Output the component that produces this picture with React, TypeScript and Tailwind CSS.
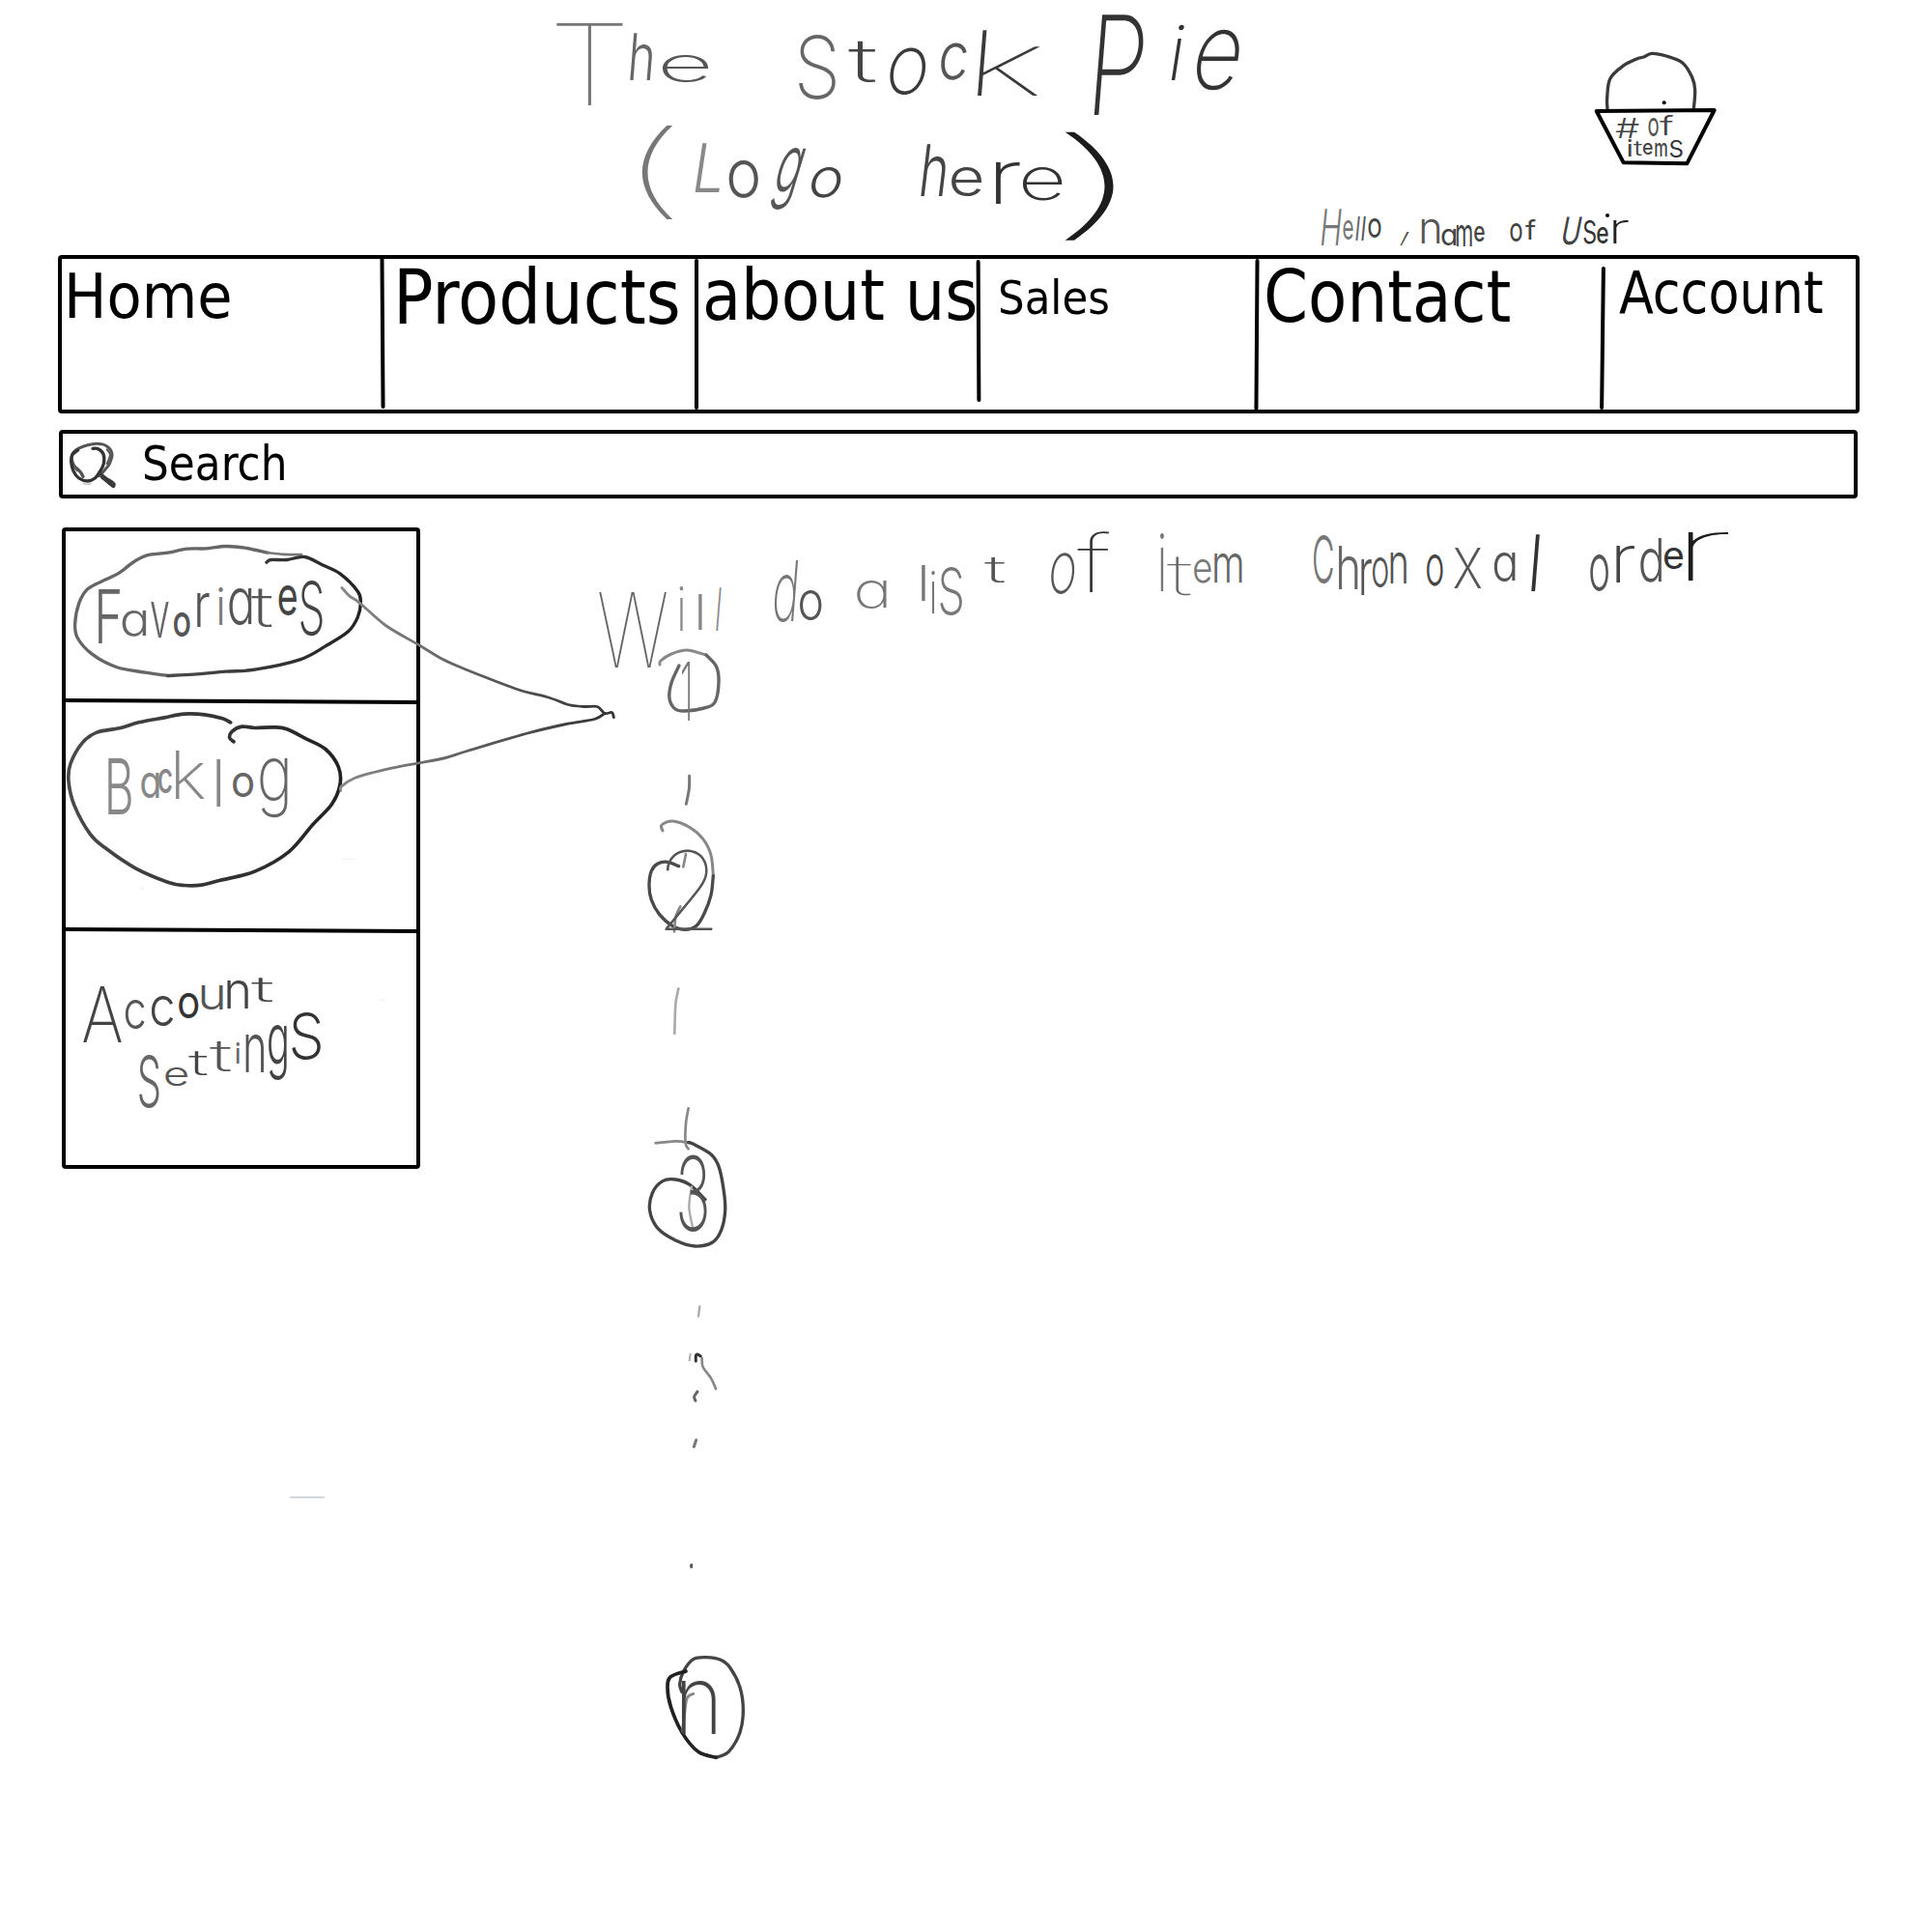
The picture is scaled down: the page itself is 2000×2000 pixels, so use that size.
import React from "react";

type Glyph = [ch: string, x1: number, y1: number, x2: number, y2: number, color?: string, lean?: number];

const HAND = '"Inter", "Lato", sans-serif';
const PRINT = '"DejaVu Sans Condensed", "DejaVu Sans", sans-serif';

const ctx = document.createElement("canvas").getContext("2d")!;

function measure(text: string, size: number, family: string, weight: number) {
  ctx.font = `${weight} ${size}px ${family}`;
  return ctx.measureText(text);
}

/* Text scaled so that its visible ink fills a box of w by h pixels. */
function Fit({
  text,
  w,
  h,
  family = PRINT,
  pen,
  lean = 0,
}: {
  text: string;
  w: number;
  h: number;
  family?: string;
  pen?: number;
  lean?: number;
}) {
  const probe = measure(text, 100, family, 300);
  const size = (100 * h) / (probe.actualBoundingBoxAscent + probe.actualBoundingBoxDescent);
  const natural = ((probe.actualBoundingBoxLeft + probe.actualBoundingBoxRight) * size) / 100;
  const stretch = /^[il1]$/.test(text) ? 1 : Math.max(0.5, (w - Math.abs(lean) * h) / natural);
  const em = stretch > 1 ? size * stretch : size * Math.sqrt(stretch);
  const weight = pen ? Math.max(100, Math.min(500, Math.round(100 + (pen / em - 0.023) * 4600))) : 400;
  const m = measure(text, size, family, weight);
  const inkW = m.actualBoundingBoxLeft + m.actualBoundingBoxRight;
  const inkH = m.actualBoundingBoxAscent + m.actualBoundingBoxDescent;
  const base = m.fontBoundingBoxAscent + (size - m.fontBoundingBoxAscent - m.fontBoundingBoxDescent) / 2;
  const top = base - m.actualBoundingBoxAscent;
  const sy = h / inkH;
  const sx = Math.max(0.3, (w - Math.abs(lean) * inkH) / inkW);
  const tx = sx * m.actualBoundingBoxLeft + lean * (lean > 0 ? top + inkH : top);
  return (
    <span
      className="absolute left-0 top-0 block origin-top-left whitespace-pre leading-none [font-feature-settings:'cv11']"
      style={{
        fontFamily: family,
        fontSize: size,
        fontWeight: weight,
        transform: `matrix(${sx},0,${-lean},${sy},${tx},${-sy * top})`,
      }}
    >
      {text}
    </span>
  );
}

function Printed({ text, w, h, className }: { text: string; w: number; h: number; className: string }) {
  return (
    <span className={`relative block shrink-0 text-black ${className}`} style={{ width: w, height: h }}>
      <Fit text={text} w={w} h={h} />
    </span>
  );
}

/* A handwritten word: every letter has its own box, the word takes their common bounds. */
function Word({
  glyphs,
  className = "",
  color = "#444",
  pen = 4,
}: {
  glyphs: Glyph[];
  className?: string;
  color?: string;
  pen?: number;
}) {
  const x = Math.min(...glyphs.map((g) => g[1]));
  const y = Math.min(...glyphs.map((g) => g[2]));
  const w = Math.max(...glyphs.map((g) => g[3])) - x;
  const h = Math.max(...glyphs.map((g) => g[4])) - y;
  return (
    <span className={`relative block shrink-0 ${className}`} style={{ width: w, height: h }}>
      {glyphs.map(([ch, x1, y1, x2, y2, c, lean], i) => (
        <span
          key={i}
          className="absolute block"
          style={{ left: x1 - x, top: y1 - y, width: x2 - x1, height: y2 - y1, color: c ?? color }}
        >
          <Fit text={ch} w={x2 - x1} h={y2 - y1} family={HAND} pen={pen} lean={lean} />
        </span>
      ))}
    </span>
  );
}

/* Smooth pen line through a list of points. */
function line(p: number[]) {
  const n = p.length / 2;
  const at = (i: number) => {
    const k = Math.max(0, Math.min(n - 1, i));
    return [p[2 * k], p[2 * k + 1]];
  };
  let d = `M${p[0]} ${p[1]}`;
  for (let i = 0; i < n - 1; i++) {
    const [a, b, c, e] = [at(i - 1), at(i), at(i + 1), at(i + 2)];
    d += `C${b[0] + (c[0] - a[0]) / 6} ${b[1] + (c[1] - a[1]) / 6} ${c[0] - (e[0] - b[0]) / 6} ${c[1] - (e[1] - b[1]) / 6} ${c[0]} ${c[1]}`;
  }
  return d;
}

function Pen({ p, c = "#444", w = 11 }: { p: number[]; c?: string; w?: number }) {
  return <path d={line(p)} fill="none" stroke={c} strokeWidth={w} strokeLinecap="round" strokeLinejoin="round" />;
}

function Divider({ className }: { className: string }) {
  return <span className={`block w-1 shrink-0 rounded-full bg-black ${className}`} />;
}

function Cart() {
  return (
    <div className="relative ml-[306px] mt-[50px] h-[124px] w-[132px]">
      <svg className="block h-[124px] w-[132px]" viewBox="918 60 396 372">
        <Pen p={[972, 248, 971, 215, 980, 155, 1020, 115, 1065, 92, 1085, 87, 1110, 76, 1155, 84, 1205, 105, 1235, 150, 1244, 190, 1240, 248]} c="#3a3a3a" w={10} />
        <path d="M938 255 1304 252 1219 418 1022 415Z" fill="none" stroke="#000" strokeWidth={12} strokeLinejoin="round" />
        <circle cx="1148" cy="229" r="6" fill="#000" />
      </svg>
      <div className="absolute left-[26px] top-[69px] flex items-start">
        <Word pen={2.6} color="#444" className="mt-1" glyphs={[["#", 1672, 123, 1697, 144]]} />
        <Word pen={2.6} color="#444" className="ml-[9px]" glyphs={[["o", 1706, 123, 1717, 142, "#555"], ["f", 1718, 119, 1732, 140]]} />
      </div>
      <div className="absolute left-[39px] top-[93px]">
        <Word
          pen={2.6}
          color="#444"
          glyphs={[["i", 1685, 143, 1689, 162], ["t", 1691, 145, 1700, 162], ["e", 1701, 149, 1711, 161], ["m", 1713, 148, 1726, 162], ["s", 1728, 145, 1742, 164, "#333"]]}
        />
      </div>
    </div>
  );
}

function Header() {
  return (
    <header className="flex h-[264px] w-full">
      <h1 className="w-[1340px] shrink-0">
        <span className="flex h-[119px] items-start">
          <Word className="ml-[576px] mt-[25px]" color="#666" glyphs={[["T", 576, 25, 645, 110, "#777"], ["h", 652, 34, 677, 83, "#666", 0.08], ["e", 684, 57, 733, 85, "#555"]]} />
          <Word className="ml-[94px] mt-8" glyphs={[["S", 827, 36, 865, 103, "#666"], ["t", 878, 42, 907, 86, "#444"], ["o", 918, 50, 962, 99, "#3a3a3a", 0.15], ["c", 972, 45, 1002, 82, "#555", 0.1], ["k", 1012, 32, 1081, 100, "#3a3a3a", 0.08]]} />
          <Word className="ml-[51px] mt-[15px]" color="#2a2a2a" glyphs={[["P", 1132, 15, 1186, 119, "#333", 0.08], ["i", 1211, 26, 1227, 83, "#333", 0.16], ["e", 1233, 31, 1288, 94, "#333", 0.2]]} />
        </span>
        <span className="flex items-start">
          <Word className="ml-[664px] mt-3" glyphs={[["(", 664, 131, 698, 228, "#777"], ["L", 719, 148, 752, 199, "#888", 0.15], ["o", 754, 167, 785, 206, "#555"], ["g", 794, 153, 835, 217, "#555", 0.3], ["o", 837, 173, 874, 205, "#444", 0.2]]} />
          <Word className="ml-[79px] mt-[18px]" glyphs={[["h", 953, 150, 982, 204, "#444", 0.12], ["e", 984, 173, 1017, 203, "#444"], ["r", 1031, 169, 1056, 212, "#333"], ["e", 1058, 173, 1100, 208, "#333"], [")", 1101, 137, 1154, 249, "#1c1c1c"]]} />
        </span>
      </h1>
      <div className="flex flex-1 flex-col">
        <Cart />
        <div className="ml-7 mt-[43px] flex items-start">
          <Word pen={2.8} glyphs={[["H", 1368, 217, 1389, 255, "#777", 0.1], ["e", 1390, 229, 1401, 249, "#777"], ["l", 1403, 225, 1408, 250, "#666", 0.1], ["l", 1409, 225, 1414, 250, "#555", 0.1], ["o", 1416, 227, 1430, 247, "#444"], [",", 1449, 240, 1459, 254, "#555", 0.4]]} />
          <Word pen={2.8} className="ml-3 mt-[10px]" glyphs={[["n", 1471, 227, 1490, 252, "#555"], ["a", 1492, 237, 1506, 255, "#444"], ["m", 1508, 233, 1524, 255], ["e", 1526, 235, 1537, 251]]} />
          <Word pen={2.8} className="ml-[26px] mt-[10px]" glyphs={[["o", 1563, 232, 1576, 251], ["f", 1579, 227, 1590, 248]]} />
          <Word pen={2.8} className="ml-[26px] mt-[7px]" glyphs={[["U", 1616, 224, 1638, 253, "#444", 0.2], ["s", 1639, 228, 1652, 253, "#333"], ["e", 1653, 235, 1665, 252, "#333"], ["r", 1669, 228, 1686, 252, "#222"]]} />
          <span className="-ml-[24px] mt-1 block size-1 rounded-full bg-black" />
        </div>
      </div>
    </header>
  );
}

function Nav() {
  return (
    <nav className="ml-[60px] flex h-[164px] w-[1865px] rounded-sm border-4 border-black">
      <a className="w-[330px] shrink-0"><Printed text="Home" w={167} h={49} className="ml-[7px] mt-[14px]" /></a>
      <Divider className="-mt-[3px] h-[158px] -rotate-[0.4deg]" />
      <a className="w-[321px] shrink-0"><Printed text="Products" w={289} h={61} className="ml-[15px] mt-2" /></a>
      <Divider className="h-[156px]" />
      <a className="w-[288px] shrink-0"><Printed text="about us" w={280} h={57} className="ml-[7px] mt-[7px]" /></a>
      <Divider className="mt-[1px] h-[147px] -rotate-[0.3deg]" />
      <a className="w-[284px] shrink-0"><Printed text="Sales" w={112} h={37.5} className="ml-5 mt-[21px]" /></a>
      <Divider className="h-[157px] rotate-[0.4deg]" />
      <a className="w-[354px] shrink-0"><Printed text="Contact" w={252} h={57} className="ml-2 mt-[9px]" /></a>
      <Divider className="mt-[8px] h-[148px] rotate-[0.7deg]" />
      <a><Printed text="Account" w={211} h={45} className="ml-[15px] mt-3" /></a>
    </nav>
  );
}

function SearchBar() {
  return (
    <div className="ml-[61px] mt-[17px] flex h-[71px] w-[1862px] items-start rounded-sm border-4 border-black">
      <svg className="ml-[5px] mt-[6px] h-[54px] w-[52px] shrink-0" viewBox="30 45 156 162">
        <Pen p={[60, 140, 46, 118, 43, 95, 55, 78, 80, 66, 120, 58, 152, 66, 168, 90, 160, 120, 145, 140, 128, 158]} c="#555" w={9} />
        <Pen p={[108, 73, 125, 74, 141, 90, 142, 120, 130, 145, 115, 165, 92, 174, 65, 165, 48, 143, 41, 112, 45, 92, 62, 78]} c="#333" w={10} />
        <Pen p={[152, 76, 162, 92, 152, 120]} c="#555" w={6} />
        <Pen p={[58, 134, 70, 146, 78, 160]} c="#555" w={10} />
        <Pen p={[128, 148, 148, 164, 164, 174, 174, 182, 172, 191, 158, 180, 136, 162]} c="#3a3a3a" w={9} />
        <Pen p={[78, 181, 92, 184, 102, 182]} c="#bbb" w={4} />
      </svg>
      <Printed text="Search" w={145} h={38.5} className="ml-[27px] mt-[10px]" />
    </div>
  );
}

function Sidebar() {
  return (
    <aside className="relative h-[664px] w-[371px] rounded-sm border-4 border-black">
      <div className="flex h-[174px]">
        <Word
          className="ml-[34px] mt-[51px]"
          glyphs={[["F", 102, 611, 124, 667, "#666"], ["a", 126, 633, 149, 660, "#666"], ["v", 156, 623, 175, 660, "#666"], ["o", 180, 634, 197, 659, "#555"], ["r", 204, 614, 217, 649, "#555"], ["i", 226, 608, 231, 647, "#777"], ["a", 237, 610, 258, 648, "#555"], ["t", 260, 610, 282, 651, "#555"], ["e", 288, 606, 307, 637, "#444"], ["s", 311, 601, 334, 659, "#444"]]}
        />
      </div>
      <span className="block h-1 w-full skew-y-[0.35deg] bg-black" />
      <div className="flex h-[233px]">
        <Word
          className="ml-11 mt-[50px]"
          color="#777"
          glyphs={[["B", 112, 785, 136, 843, "#888"], ["a", 146, 800, 163, 827, "#888"], ["c", 164, 795, 178, 820, "#888"], ["k", 182, 777, 212, 827, "#888"], ["l", 224, 785, 229, 834, "#888"], ["o", 241, 799, 263, 824, "#666"], ["g", 269, 785, 298, 847, "#666"]]}
        />
      </div>
      <span className="block h-1 w-full skew-y-[0.3deg] bg-black" />
      <div className="flex flex-col">
        <Word
          className="ml-[18px] mt-[47px]"
          glyphs={[["A", 86, 1020, 126, 1078, "#444"], ["c", 129, 1033, 150, 1063, "#555"], ["c", 157, 1029, 180, 1060, "#444"], ["o", 185, 1026, 206, 1052, "#333"], ["u", 208, 1018, 231, 1043, "#555"], ["n", 235, 1013, 257, 1042, "#444"], ["t", 260, 1010, 284, 1036, "#444"]]}
        />
        <Word
          className="-mt-[31px] ml-[76px]"
          glyphs={[["S", 144, 1091, 165, 1146, "#666"], ["e", 170, 1104, 194, 1124, "#555"], ["t", 195, 1086, 216, 1112, "#444"], ["t", 217, 1076, 240, 1108, "#555"], ["i", 244, 1077, 248, 1099, "#666"], ["n", 254, 1069, 273, 1108, "#555"], ["g", 278, 1059, 297, 1117, "#444"], ["s", 302, 1047, 332, 1096, "#333"]]}
        />
      </div>
      <svg className="pointer-events-none absolute -left-1 -top-1 h-[664px] w-[590px]" viewBox="41 46.5 1770 1992">
        <defs>
          <linearGradient id="rim" x1="0" x2="1"><stop offset="0" stopColor="#4a4a4a" /><stop offset="1" stopColor="#222" /></linearGradient>
          <linearGradient id="trail" x1="0" x2="1"><stop offset="0" stopColor="#888" /><stop offset="1" stopColor="#333" /></linearGradient>
        </defs>
        <Pen c="#666" w={10} p={[680, 125, 610, 110, 550, 105, 490, 112, 430, 113, 370, 125, 305, 133, 265, 153, 220, 187, 180, 207, 122, 237, 95, 280, 82, 345, 90, 390, 135, 440, 210, 480, 300, 497, 370, 507]} />
        <Pen c="#777" w={8} p={[680, 125, 730, 130, 785, 131]} />
        <Pen c="url(#rim)" w={10} p={[370, 507, 450, 503, 550, 494, 640, 488, 780, 457, 860, 415, 930, 370, 960, 325, 969, 280, 960, 245, 905, 190, 850, 163, 795, 138, 740, 147, 690, 147, 677, 155]} />
        <Pen c="url(#rim)" w={11} p={[565, 652, 540, 640, 485, 628, 420, 626, 360, 637, 280, 652, 220, 670, 150, 683, 105, 715, 68, 780, 62, 835, 80, 910, 130, 1000, 180, 1045, 270, 1105, 370, 1148, 420, 1158, 475, 1157, 530, 1143, 640, 1115, 745, 1055, 820, 970, 880, 905, 905, 845, 900, 790, 860, 735, 800, 703, 740, 673, 700, 667, 640, 669, 600, 665, 570, 680, 562, 700, 575, 712]} />
        <Pen c="url(#trail)" w={8.5} p={[911, 234, 935, 260, 965, 280, 1047, 351, 1149, 411, 1224, 456, 1299, 489, 1383, 522, 1464, 552, 1557, 576, 1614, 597, 1662, 603, 1704, 603, 1727, 624, 1749, 621, 1755, 636]} />
        <Pen c="url(#trail)" w={8.5} p={[1727, 624, 1695, 642, 1608, 657, 1482, 687, 1299, 741, 1233, 762, 1149, 778, 1085, 790, 1010, 807, 950, 825, 910, 850, 907, 864]} />
        <Pen c="#ddd" w={3} p={[288, 1162, 294, 1170]} />
        <Pen c="#eee" w={3} p={[910, 1076, 950, 1077]} />
        <Pen c="#eee" w={3} p={[1030, 1514, 1046, 1513]} />
      </svg>
    </aside>
  );
}

function ListNote() {
  return (
    <p className="flex items-start">
      <Word className="ml-[185px] mt-[62px]" pen={3} color="#888" glyphs={[["W", 620, 613, 690, 691, "#666"], ["i", 703, 608, 708, 654], ["l", 723, 616, 727, 653], ["l", 741, 608, 747, 653, "#888", 0.08]]} />
      <Word className="ml-[53px] mt-[35px]" pen={3} glyphs={[["d", 800, 581, 826, 645, "#777", 0.08], ["o", 828, 611, 851, 642, "#555"]]} />
      <Word className="ml-[35px] mt-[56px]" pen={3} glyphs={[["a", 886, 602, 915, 631, "#777"]]} />
      <Word className="ml-[39px] mt-[30px]" pen={3} color="#777" glyphs={[["l", 954, 586, 958, 623], ["i", 964, 592, 968, 636], ["s", 973, 588, 996, 638], ["t", 1019, 576, 1040, 604, "#555"]]} />
      <Word className="ml-[46px] mt-[6px]" pen={3.4} glyphs={[["o", 1086, 573, 1114, 615, "#555", 0.1], ["f", 1115, 552, 1149, 614, "#333"]]} />
      <Word className="ml-[52px] mt-[7px]" pen={3} color="#777" glyphs={[["i", 1201, 553, 1205, 613], ["t", 1208, 576, 1234, 618, "#666"], ["e", 1236, 579, 1254, 604], ["m", 1257, 573, 1286, 603, "#666"]]} />
      <Word className="ml-[74px] mt-[7px]" pen={3.2} glyphs={[["C", 1360, 553, 1380, 604, "#777"], ["h", 1386, 565, 1406, 610, "#666"], ["r", 1409, 579, 1420, 616, "#555"], ["o", 1421, 577, 1437, 608, "#555"], ["n", 1439, 572, 1456, 604, "#555"], ["o", 1477, 575, 1494, 608, "#444"], ["x", 1505, 567, 1534, 609, "#555"], ["a", 1546, 572, 1566, 602, "#555"], ["l", 1585, 554, 1594, 613, "#333", 0.08]]} />
      <Word className="ml-[52px] mt-[5px]" pen={3.6} glyphs={[["o", 1646, 575, 1665, 613, "#555"], ["r", 1673, 566, 1692, 604, "#444"], ["d", 1698, 558, 1720, 604, "#555"], ["e", 1722, 567, 1742, 589, "#333"], ["r", 1746, 551, 1789, 601, "#1c1c1c"]]} />
    </p>
  );
}

function Timeline() {
  return (
    <ol className="absolute left-[225px] top-[121px] w-[130px]">
      <li className="relative h-[114px]">
        <svg className="block h-[114px] w-[130px]" viewBox="662 667 130 114">
          <Pen c="#888" w={3} p={[685, 688, 686, 684, 697, 677, 713, 673, 733, 678]} />
          <Pen c="#666" w={3.4} p={[733, 678, 743.6, 690, 746, 707, 742, 727, 731, 733, 711, 736, 701, 734, 695, 723, 697, 707, 705, 689]} />
        </svg>
        <Word className="!absolute left-[46px] top-[18px]" pen={3} color="#777" glyphs={[["1", 706, 685, 714, 746]]} />
      </li>
      <li className="relative h-[319px]">
        <svg className="block h-[319px] w-[130px]" viewBox="62 3 390 957">
          <Pen c="#777" w={9} p={[223, 70, 222, 110, 213, 157]} />
          <Pen c="#888" w={9} p={[140, 240, 137, 222, 172, 210, 225, 230, 265, 265, 290, 315, 297, 380]} />
          <Pen c="#4a4a4a" w={10} p={[297, 380, 290, 440, 270, 495, 245, 535, 210, 547, 170, 535, 130, 500, 105, 455, 98, 410, 105, 365, 125, 342, 155, 337, 190, 350]} />
          <Pen c="#888" w={8} p={[212, 312, 204, 352]} />
          <Pen c="#888" w={8} p={[195, 475, 181, 505, 176, 553]} />
          <Pen c="#aaa" w={8} p={[189, 730, 180, 780, 177, 870]} />
        </svg>
        <Word className="!absolute left-[28px] top-[98px]" pen={3} color="#555" glyphs={[["2", 688, 879, 738, 963]]} />
      </li>
      <li className="relative h-[480px]">
        <svg className="block h-[480px] w-[130px]" viewBox="62 -60 390 1440">
          <Pen c="#888" w={8} p={[220, 82, 212, 130, 211, 190, 220, 208]} />
          <Pen c="#888" w={8} p={[118, 190, 180, 184, 220, 188]} />
          <Pen c="#444" w={10} p={[220, 188, 235, 193, 290, 225, 315, 265, 330, 340, 334, 400, 322, 460, 295, 498, 240, 510, 180, 492, 125, 455, 100, 400, 108, 345, 140, 308, 180, 303, 225, 320, 272, 365]} />
          <Pen c="#aaa" w={7} p={[230, 325, 222, 390, 235, 458]} />
          <Pen c="#aaa" w={7} p={[255, 697, 251, 728]} />
          <Pen c="#aaa" w={6} p={[226, 845, 223, 865]} />
          <Pen c="#333" w={9} p={[243, 867, 243, 850, 248, 846, 258, 852]} />
          <Pen c="#888" w={8} p={[262, 858, 265, 885, 290, 920, 305, 953]} />
          <Pen c="#666" w={9} p={[248, 962, 238, 978, 242, 990]} />
          <Pen c="#777" w={9} p={[244, 1112, 237, 1133]} />
        </svg>
        <Word className="!absolute left-[43px] top-[96px]" color="#555" glyphs={[["3", 704, 1196, 733, 1276]]} />
      </li>
      <li className="relative h-[260px]">
        <svg className="block h-[260px] w-[130px]" viewBox="62 0 390 780">
          <Pen c="#555" w={9} p={[229, 120, 229, 126]} />
          <Pen c="#444" w={10} p={[200, 515, 193, 490, 205, 450, 235, 413, 275, 407, 320, 415, 350, 440, 380, 500, 390, 570, 380, 640, 345, 700, 305, 718]} />
          <Pen c="#222" w={11} p={[305, 718, 250, 700, 200, 640, 165, 560, 155, 500, 165, 467, 212, 450]} />
          <Pen c="#888" w={9} p={[235, 520, 215, 535, 207, 590, 202, 635]} />
        </svg>
        <Word className="!absolute left-[46px] top-[160px]" color="#444" glyphs={[["n", 706, 1740, 741, 1795]]} />
      </li>
    </ol>
  );
}

export default function App() {
  return (
    <div className="h-[2000px] w-[2000px] overflow-hidden bg-white">
      <Header />
      <Nav />
      <SearchBar />
      <main className="ml-16 mt-[29.5px] flex items-start">
        <Sidebar />
        <section className="relative flex-1">
          <ListNote />
          <Timeline />
        </section>
      </main>
      <span className="ml-[300px] mt-[339px] block h-[2px] w-9 rounded-full bg-gray-300" />
    </div>
  );
}
